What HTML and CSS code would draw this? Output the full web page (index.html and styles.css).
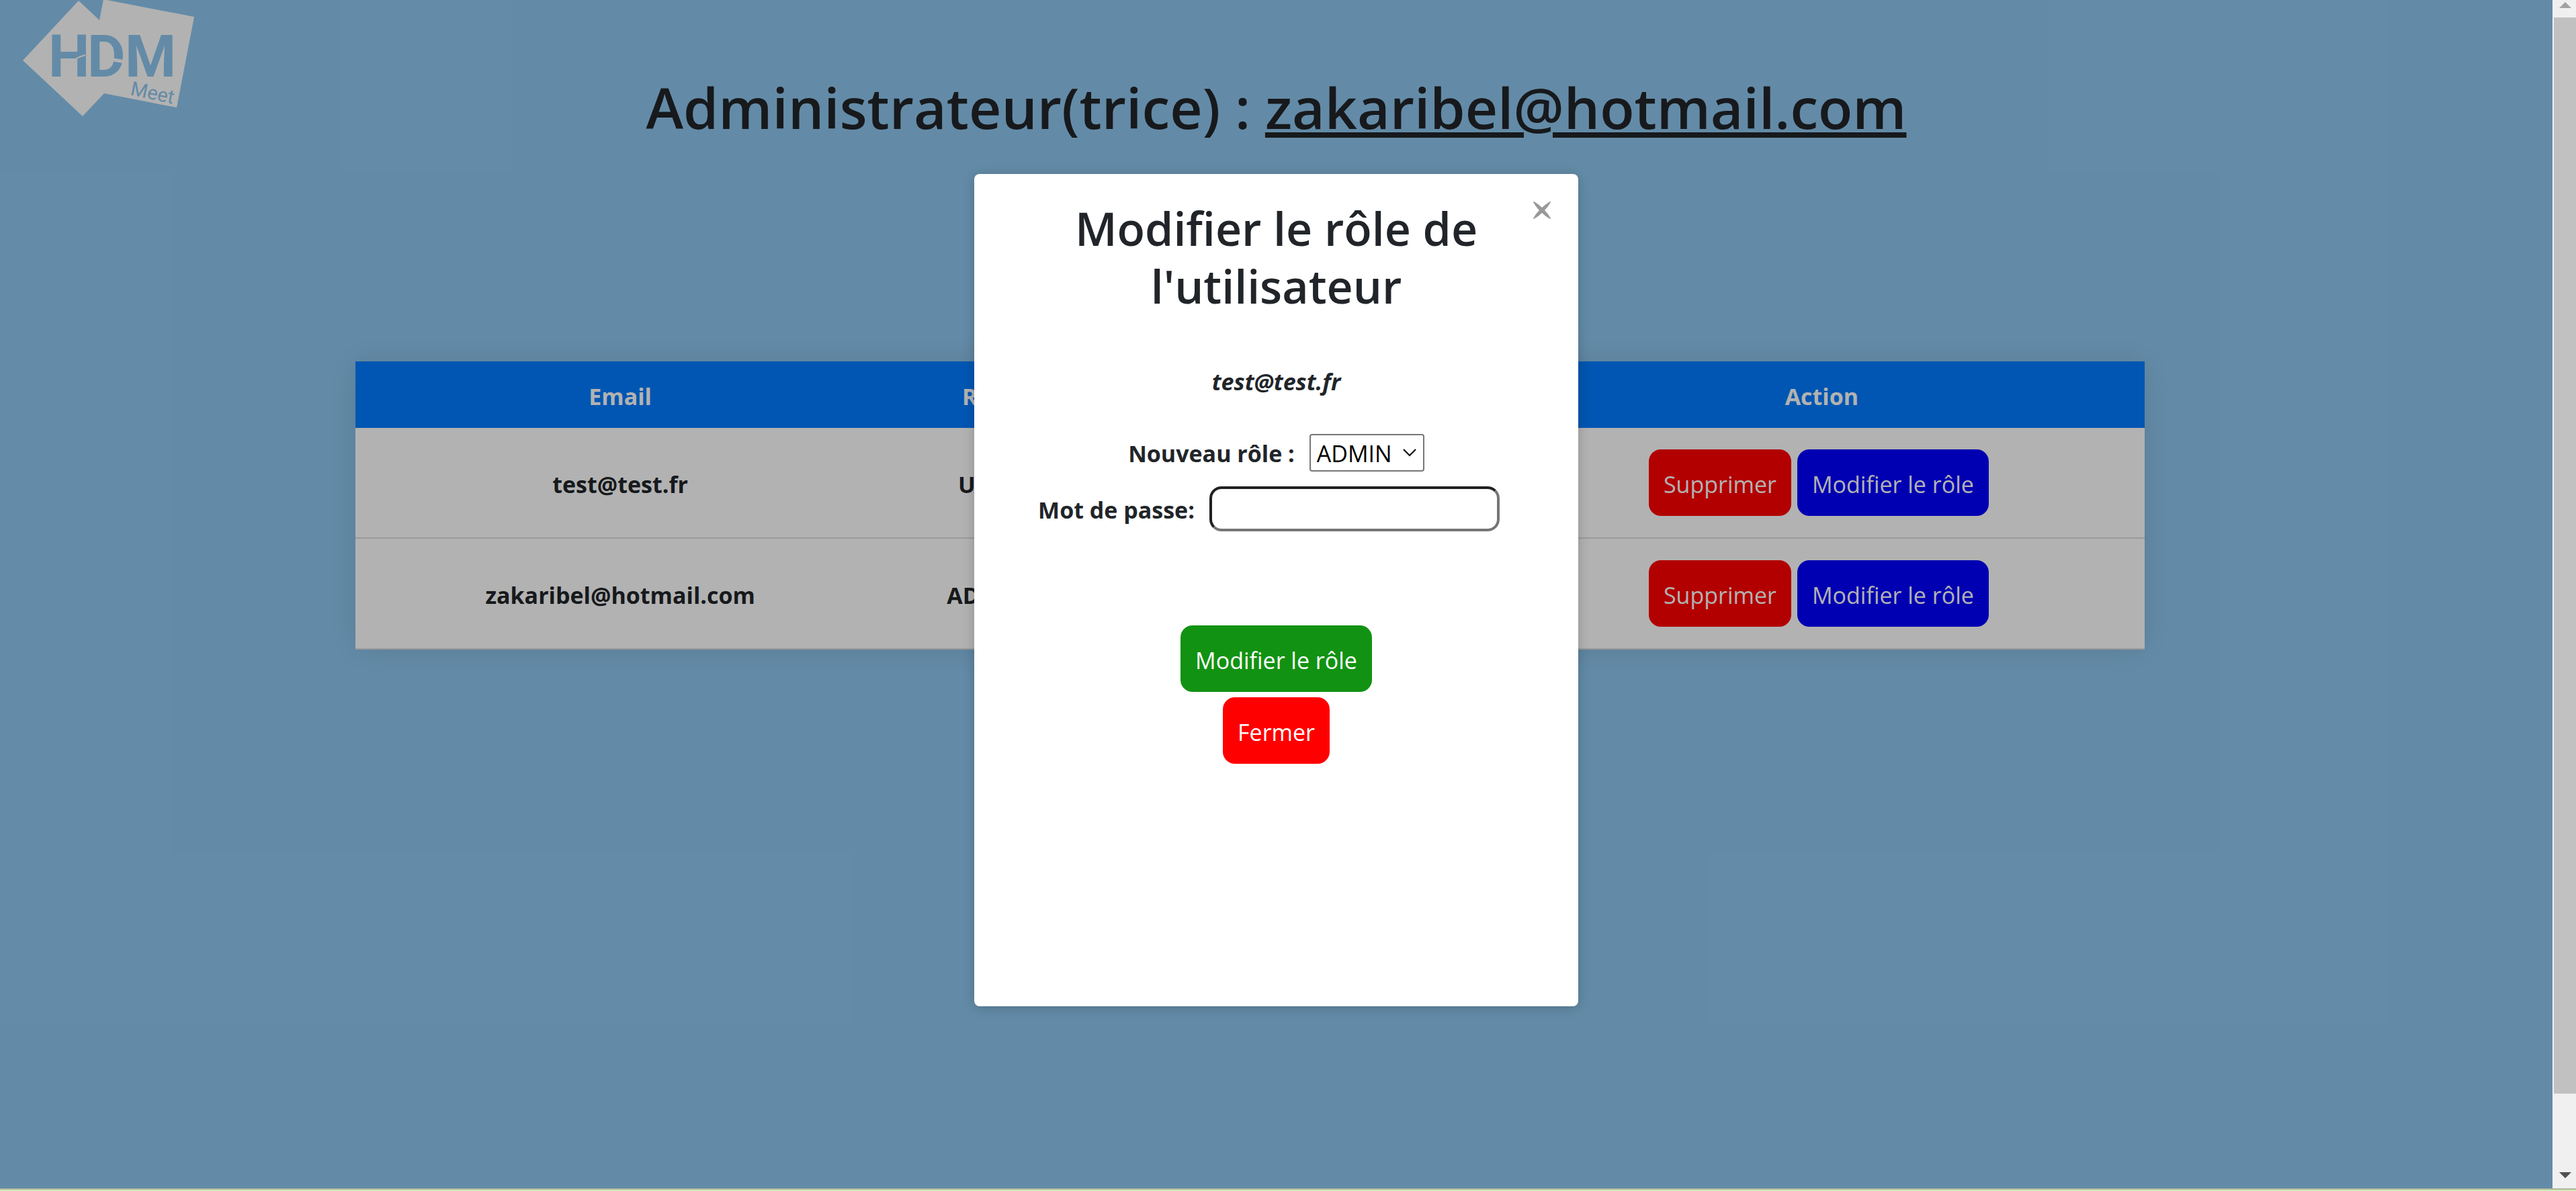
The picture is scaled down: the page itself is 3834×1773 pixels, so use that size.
FILE: index.html
```html
<!DOCTYPE html>
<html lang="fr">
<head>
  <meta charset="utf-8">
  <title>HDM Meet</title>
  <link rel="stylesheet" href="styles.css">
</head>
<body>
  <div class="viewport">
    <div class="page">
      <svg class="logo" viewBox="0 0 300 180" role="img" aria-label="HDM Meet">
        <path class="logo-shape" d="M34 90 117 1 148 30 154 -1 289 25 263 160 155 139 123 173Z"/>
        <text class="logo-name" x="72 130 186" y="114">HDM</text>
        <path class="logo-cut" d="M111 89Q118 84 127 82"/>
        <path class="logo-cut logo-cut-wide" d="M168 89 187 92"/>
        <text class="logo-sub" transform="translate(193 141) rotate(12)">Meet</text>
      </svg>
      <h1 class="title">Administrateur(trice) : <u>zakaribel@hotmail.com</u></h1>
      <table class="users">
        <colgroup><col class="col-email"><col class="col-role"><col class="col-spare"><col class="col-action"></colgroup>
        <thead>
          <tr><th>Email</th><th>Rôle</th><th></th><th>Action</th></tr>
        </thead>
        <tbody>
          <tr>
            <td>test@test.fr</td><td>USER</td><td></td>
            <td class="actions"><button class="btn btn-red" type="button">Supprimer</button><button class="btn btn-blue" type="button">Modifier le rôle</button></td>
          </tr>
          <tr>
            <td>zakaribel@hotmail.com</td><td>ADMIN</td><td></td>
            <td class="actions"><button class="btn btn-red" type="button">Supprimer</button><button class="btn btn-blue" type="button">Modifier le rôle</button></td>
          </tr>
        </tbody>
      </table>
      <div class="overlay">
        <form class="modal" role="dialog" aria-labelledby="modal-title">
          <button class="close" type="button" aria-label="Fermer la fenêtre">
            <svg viewBox="0 0 26 26"><path d="M0 1Q0 0 1 0Q8 4 13 9Q18 4 25 0Q26 0 26 1Q22 8 17 13Q22 18 26 25Q26 26 25 26Q18 22 13 17Q8 22 1 26Q0 26 0 25Q4 18 9 13Q4 8 0 1Z"/></svg>
          </button>
          <h2 class="modal-title" id="modal-title">Modifier le rôle de l'utilisateur</h2>
          <p class="modal-user">test@test.fr</p>
          <div class="field">
            <label for="role">Nouveau rôle :</label>
            <span class="select">
              <select id="role"><option>ADMIN</option></select>
              <svg viewBox="0 0 20 12"><path d="M1 1 10 10 19 1"/></svg>
            </span>
          </div>
          <div class="field">
            <label for="password">Mot de passe:</label>
            <input id="password" type="password">
          </div>
          <div class="modal-actions">
            <button class="btn btn-green" type="submit">Modifier le rôle</button>
            <button class="btn btn-red" type="button">Fermer</button>
          </div>
        </form>
      </div>
    </div>
    <div class="scrollbar" aria-hidden="true">
      <svg class="arrow-up" viewBox="0 0 18 9"><path d="M0 9 9 0 18 9Z"/></svg>
      <div class="thumb"></div>
      <svg class="arrow-down" viewBox="0 0 18 9"><path d="M0 0 9 9 18 0Z"/></svg>
    </div>
  </div>
  <div class="edge"></div>
</body>
</html>
```

FILE: styles.css
```css
* { box-sizing: border-box; }

body {
  margin: 0;
  height: 100vh;
  display: flex;
  flex-direction: column;
  overflow: hidden;
  font-family: "Open Sans", "Noto Sans", sans-serif;
  font-size: 34px;
  line-height: 54px;
  color: #212529;
}

.viewport { flex: 1; min-height: 0; display: flex; }

.page {
  position: relative;
  flex: 1;
  min-width: 0;
  background: #8fc7f0;
}

.edge {
  height: 4px;
  background: #d5e8b8;
  border-top: 2px solid #abb79b;
}

/* Logo */
.logo { position: absolute; top: 0; left: 0; width: 300px; height: 180px; }
.logo-shape { fill: #fff; }
.logo-name { fill: #8fc7f0; font: 700 87px Roboto, sans-serif; }
.logo-sub { fill: #8fc7f0; font: 400 29px Roboto, sans-serif; }
.logo-cut { fill: none; stroke: #fff; stroke-width: 2; }
.logo-cut-wide { stroke-width: 5; }

/* Page content */
.title {
  margin: 0;
  padding: 106px 0 0;
  font-size: 84px;
  line-height: 108px;
  font-weight: 600;
  text-align: center;
}

.users {
  width: 70.1%;
  margin: 324px 0 0 529px;
  table-layout: fixed;
  border-collapse: separate;
  border-spacing: 0;
  background: #fff;
  font-weight: 700;
  text-align: center;
  box-shadow: 0 0 45px rgba(0, 0, 0, .1);
}
.col-email { width: 29.6%; }
.col-role { width: 11.4%; }
.col-spare { width: 22.9%; }
.users th { height: 99px; padding: 4px 0 0; background: #007bff; color: #fff; }
.users td { padding: 34px 0 30px; border-bottom: 2px solid #ddd; }
.users .actions { padding: 32px 0; }
.actions .btn { margin-right: 9px; }

.btn {
  height: 99px;
  padding: 4px 22px 0;
  border: 0;
  border-radius: 18px;
  color: #fff;
  font: inherit;
  font-weight: 400;
  vertical-align: top;
}
.btn-red { background: #f00; }
.btn-blue { background: #00f; }
.btn-green { background: #129212; }

/* Modal */
.overlay {
  position: absolute;
  inset: 0;
  display: flex;
  align-items: flex-start;
  justify-content: center;
  padding-top: 259px;
  background: rgba(0, 0, 0, .3);
}
.modal {
  position: relative;
  width: 899px;
  min-height: 1239px;
  padding: 38px 90px;
  border-radius: 8px;
  background: #fff;
  box-shadow: 0 2px 18px rgba(0, 0, 0, .2);
}
.close {
  position: absolute;
  top: 41px;
  right: 41px;
  width: 26px;
  height: 26px;
  padding: 0;
  border: 0;
  background: none;
}
.close svg { display: block; fill: #999; }
.modal-title {
  margin: 0;
  font-size: 68px;
  line-height: 86px;
  font-weight: 600;
  text-align: center;
}
.modal-user {
  margin: 72px 0 51px;
  font-weight: 700;
  font-style: italic;
  text-align: center;
}
.field {
  display: flex;
  justify-content: center;
  align-items: center;
  gap: 22px;
  margin-bottom: 22px;
  font-weight: 700;
}
.field label { padding-top: 2px; }
.select { position: relative; }
.select svg {
  position: absolute;
  right: 12px;
  top: 22px;
  width: 20px;
  height: 12px;
  fill: none;
  stroke: #000;
  stroke-width: 2;
  pointer-events: none;
}
.select select {
  display: block;
  appearance: none;
  width: 171px;
  height: 56px;
  padding: 0 9px;
  border: 2px solid #767676;
  border-radius: 4px;
  background: #fff;
  color: #000;
  font: inherit;
  font-weight: 400;
}
.field input {
  width: 432px;
  height: 67px;
  margin-right: 22px;
  padding: 0 12px;
  border: 4px solid;
  border-color: #212121 #767676 #767676 #212121;
  border-radius: 18px;
  font: inherit;
}
.modal-actions {
  display: flex;
  flex-direction: column;
  align-items: center;
  gap: 8px;
  padding-top: 118px;
}

/* Scrollbar */
.scrollbar {
  width: 35px;
  display: flex;
  flex-direction: column;
  align-items: center;
  background: #f0f0f0;
  padding: 3px 0 15px 2px;
}
.scrollbar svg { width: 18px; height: 9px; }
.arrow-up { fill: #a3a3a3; }
.arrow-down { fill: #505050; }
.thumb { width: 100%; flex: 1; margin: 14px 0 117px; background: #c1c1c1; }
```
